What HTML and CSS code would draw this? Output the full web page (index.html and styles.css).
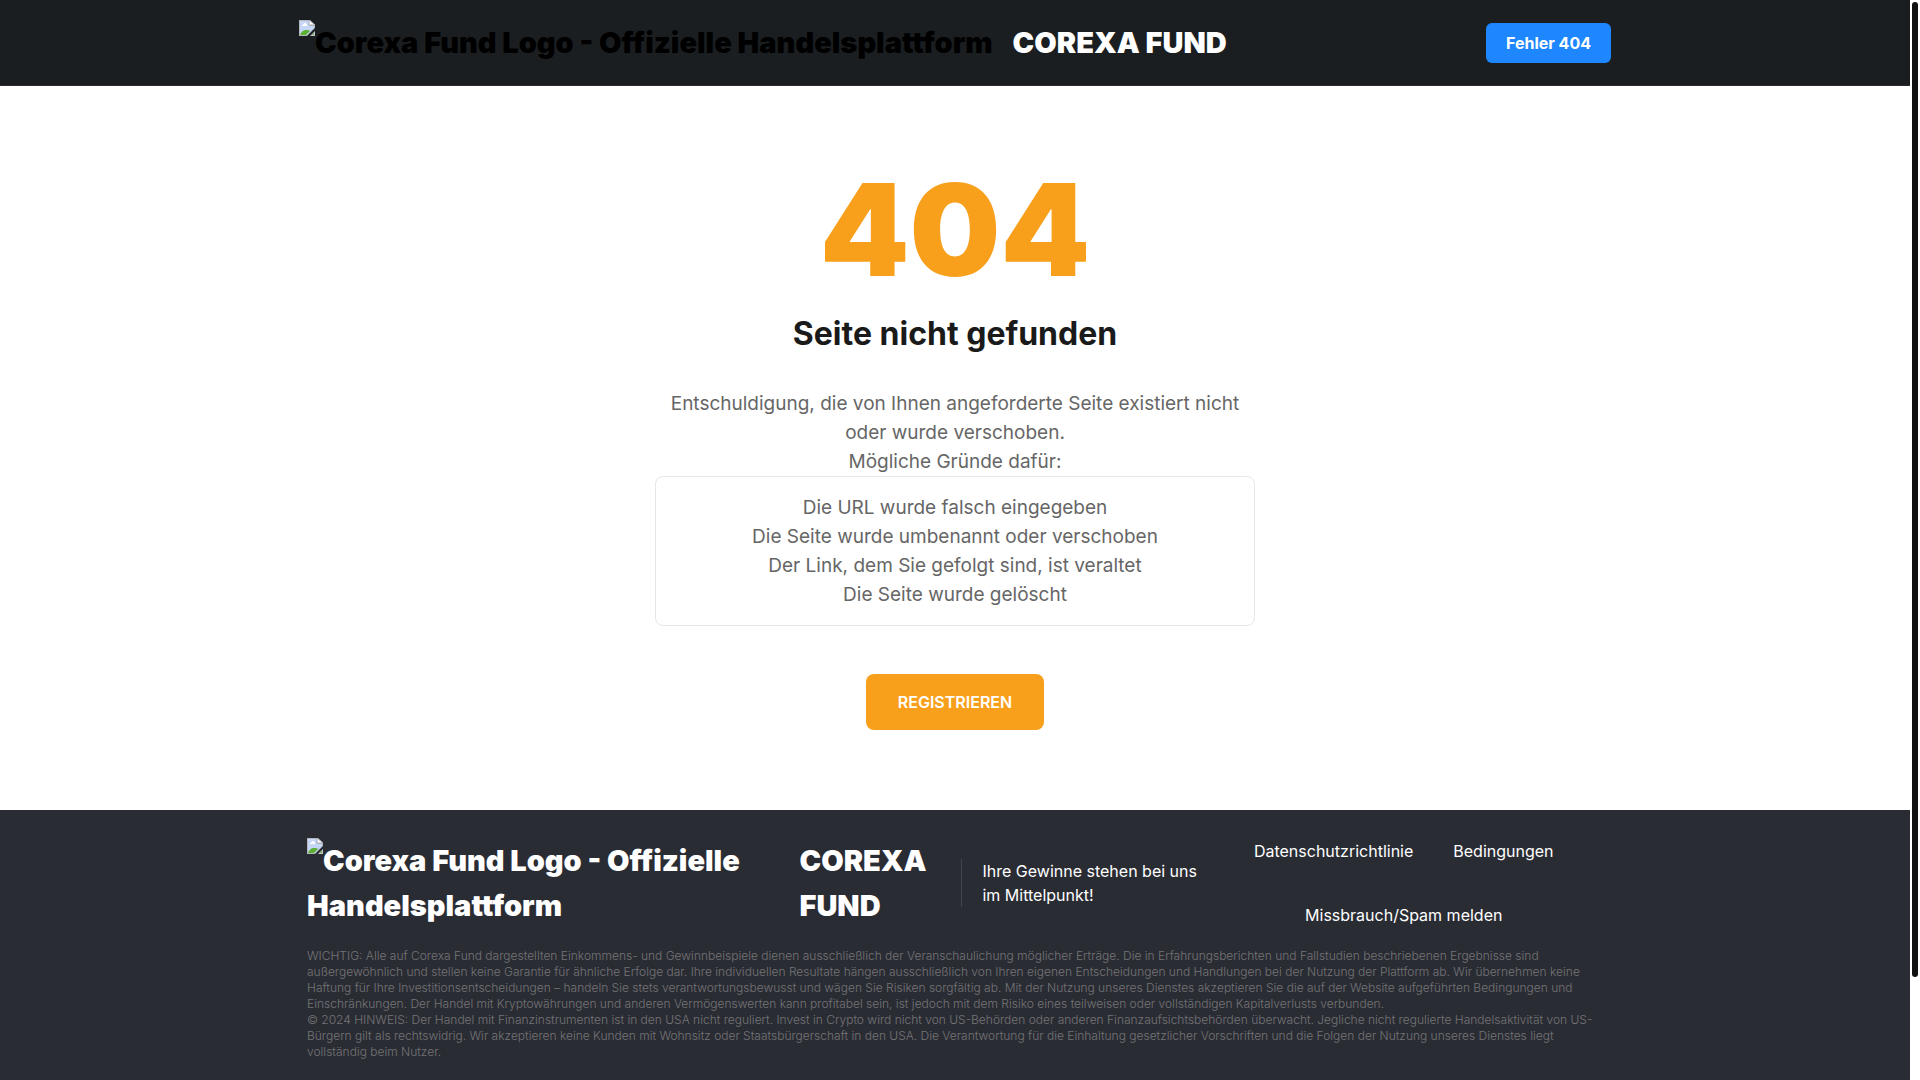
FILE: index.html
```
<!DOCTYPE html>
<html lang="de">
<head>
<meta charset="utf-8">
<meta name="viewport" content="width=device-width, initial-scale=1">
<title>Fehler 404 – Corexa Fund</title>
<link rel="stylesheet" href="styles.css">
</head>
<body>
<svg class="sprite" aria-hidden="true">
  <symbol id="missing" viewBox="0 0 16 16">
    <path d="M0 0h11l5 5v3L8 16H0z" fill="#b4b8be"/>
    <path d="M1 1h9v5h5v2l-7 7H1z" fill="#c6d6f7"/>
    <path d="M3 6V5h1V4h1V3h2v1h1v2z" fill="#fff"/>
    <path d="M1 15c1-3 3-5 6-5 2 0 3 0 4 1l-4 4z" fill="#5bb031"/>
    <path d="M10 0l6 5h-6z" fill="#fff"/>
    <path d="M10 0l6 5h-6z" fill="none" stroke="#a9adb3"/>
    <path d="M16 11v5h-5z" fill="#c4c8ce"/>
    <path d="M15 13v2h-2z" fill="#5bb031"/>
  </symbol>
</svg>

<header class="header">
  <div class="container header-row">
    <a class="brand" href="#">
      <span class="brand-alt brand-alt-dark"><svg class="missing"><use href="#missing"/></svg>Corexa Fund Logo - Offizielle Handelsplattform</span>
      <span>COREXA FUND</span>
    </a>
    <a class="badge" href="#">Fehler 404</a>
  </div>
</header>

<main class="main">
  <h1 class="code">404</h1>
  <h2 class="title">Seite nicht gefunden</h2>
  <div class="message">
    <p>Entschuldigung, die von Ihnen angeforderte Seite existiert nicht oder wurde verschoben.</p>
    <p>Mögliche Gründe dafür:</p>
    <ul class="reasons">
      <li>Die URL wurde falsch eingegeben</li>
      <li>Die Seite wurde umbenannt oder verschoben</li>
      <li>Der Link, dem Sie gefolgt sind, ist veraltet</li>
      <li>Die Seite wurde gelöscht</li>
    </ul>
  </div>
  <button class="register" type="button">REGISTRIEREN</button>
</main>

<footer class="footer">
  <div class="container footer-inner">
    <div class="footer-row">
      <a class="brand-alt" href="#"><svg class="missing"><use href="#missing"/></svg>Corexa Fund Logo - Offizielle Handelsplattform</a>
      <a class="brand-name" href="#">COREXA FUND</a>
      <p class="tagline">Ihre Gewinne stehen bei uns im Mittelpunkt!</p>
      <nav class="links">
        <a href="#">Datenschutzrichtlinie</a>
        <a href="#">Bedingungen</a>
        <a href="#">Missbrauch/Spam melden</a>
      </nav>
    </div>
    <div class="legal">
      <p>WICHTIG: Alle auf Corexa Fund dargestellten Einkommens- und Gewinnbeispiele dienen ausschließlich der Veranschaulichung möglicher Erträge. Die in Erfahrungsberichten und Fallstudien beschriebenen Ergebnisse sind außergewöhnlich und stellen keine Garantie für ähnliche Erfolge dar. Ihre individuellen Resultate hängen ausschließlich von Ihren eigenen Entscheidungen und Handlungen bei der Nutzung der Plattform ab. Wir übernehmen keine Haftung für Ihre Investitionsentscheidungen – handeln Sie stets verantwortungsbewusst und wägen Sie Risiken sorgfältig ab. Mit der Nutzung unseres Dienstes akzeptieren Sie die auf der Website aufgeführten Bedingungen und Einschränkungen. Der Handel mit Kryptowährungen und anderen Vermögenswerten kann profitabel sein, ist jedoch mit dem Risiko eines teilweisen oder vollständigen Kapitalverlusts verbunden.</p>
      <p>© 2024 HINWEIS: Der Handel mit Finanzinstrumenten ist in den USA nicht reguliert. Invest in Crypto wird nicht von US-Behörden oder anderen Finanzaufsichtsbehörden überwacht. Jegliche nicht regulierte Handelsaktivität von US-Bürgern gilt als rechtswidrig. Wir akzeptieren keine Kunden mit Wohnsitz oder Staatsbürgerschaft in den USA. Die Verantwortung für die Einhaltung gesetzlicher Vorschriften und die Folgen der Nutzung unseres Dienstes liegt vollständig beim Nutzer.</p>
    </div>
  </div>
</footer>

<div class="scrollbar" aria-hidden="true"></div>
</body>
</html>
```
FILE: styles.css
```
* {
  box-sizing: border-box;
  margin: 0;
  padding: 0;
}

body {
  padding-right: 10px;
  background: #fff;
  color: #1a1a1a;
  font: 400 16px/24px "Inter", sans-serif;
}

a {
  color: inherit;
  text-decoration: none;
}

.sprite {
  display: none;
}

.container {
  max-width: 1328px;
  margin: 0 auto;
}

.header {
  background: #1a1e20;
  border-bottom: 1px solid #2a2c34;
}

.header-row {
  display: flex;
  align-items: center;
  justify-content: space-between;
  padding: 20px 8px;
}

.brand,
.brand-alt,
.brand-name {
  color: #fff;
  font: 900 29px/45px "Inter", sans-serif;
}

.brand {
  display: flex;
  gap: 20px;
}

.brand-alt-dark {
  color: #000;
}

.missing {
  float: left;
  width: 16px;
  height: 16px;
}

.badge {
  padding: 8px 20px;
  border-radius: 6px;
  background: #1e87ff;
  color: #fff;
  font-weight: 700;
}

.main {
  display: flex;
  flex-direction: column;
  align-items: center;
  padding: 80px 16px;
  text-align: center;
}

.code {
  color: #f8a01c;
  font-size: 128px;
  font-weight: 900;
  line-height: 128px;
}

.title {
  margin: 16px 0 32px;
  font-size: 32px;
  font-weight: 700;
  line-height: 47px;
}

.message {
  max-width: 600px;
  margin-bottom: 48px;
  color: #666;
  font-size: 19px;
  line-height: 29px;
}

.reasons {
  padding: 16px;
  border: 1px solid #e5e7eb;
  border-radius: 8px;
  list-style: none;
}

.register {
  padding: 16px 32px;
  border: 0;
  border-radius: 8px;
  background: #f8a01c;
  color: #fff;
  font: 600 16px/24px "Inter", sans-serif;
}

.footer {
  background: #2a2c34;
}

.footer-inner {
  padding: 28px 16px 20px;
}

.footer-row {
  display: grid;
  grid-template-columns: 38% 12.5% 18.75% 1fr;
  align-items: center;
  color: #fff;
}

.brand-alt {
  padding-right: 40px;
}

.brand-name {
  padding-right: 20px;
}

.header .brand-alt {
  padding-right: 0;
}

.tagline {
  padding-left: 20px;
  border-left: 1px solid #40434b;
}

.links {
  display: flex;
  flex-wrap: wrap;
  justify-content: center;
  gap: 40px;
}

.legal {
  margin-top: 20px;
  color: #747476;
  font-size: 12px;
  font-weight: 300;
  line-height: 16px;
}

.scrollbar {
  position: fixed;
  inset: 0 0 0 auto;
  width: 10px;
  background: #fff;
}

.scrollbar::before {
  content: "";
  position: absolute;
  top: 2px;
  right: 2px;
  width: 6px;
  height: 90.3%;
  border-radius: 3px;
  background: #111;
}
```
